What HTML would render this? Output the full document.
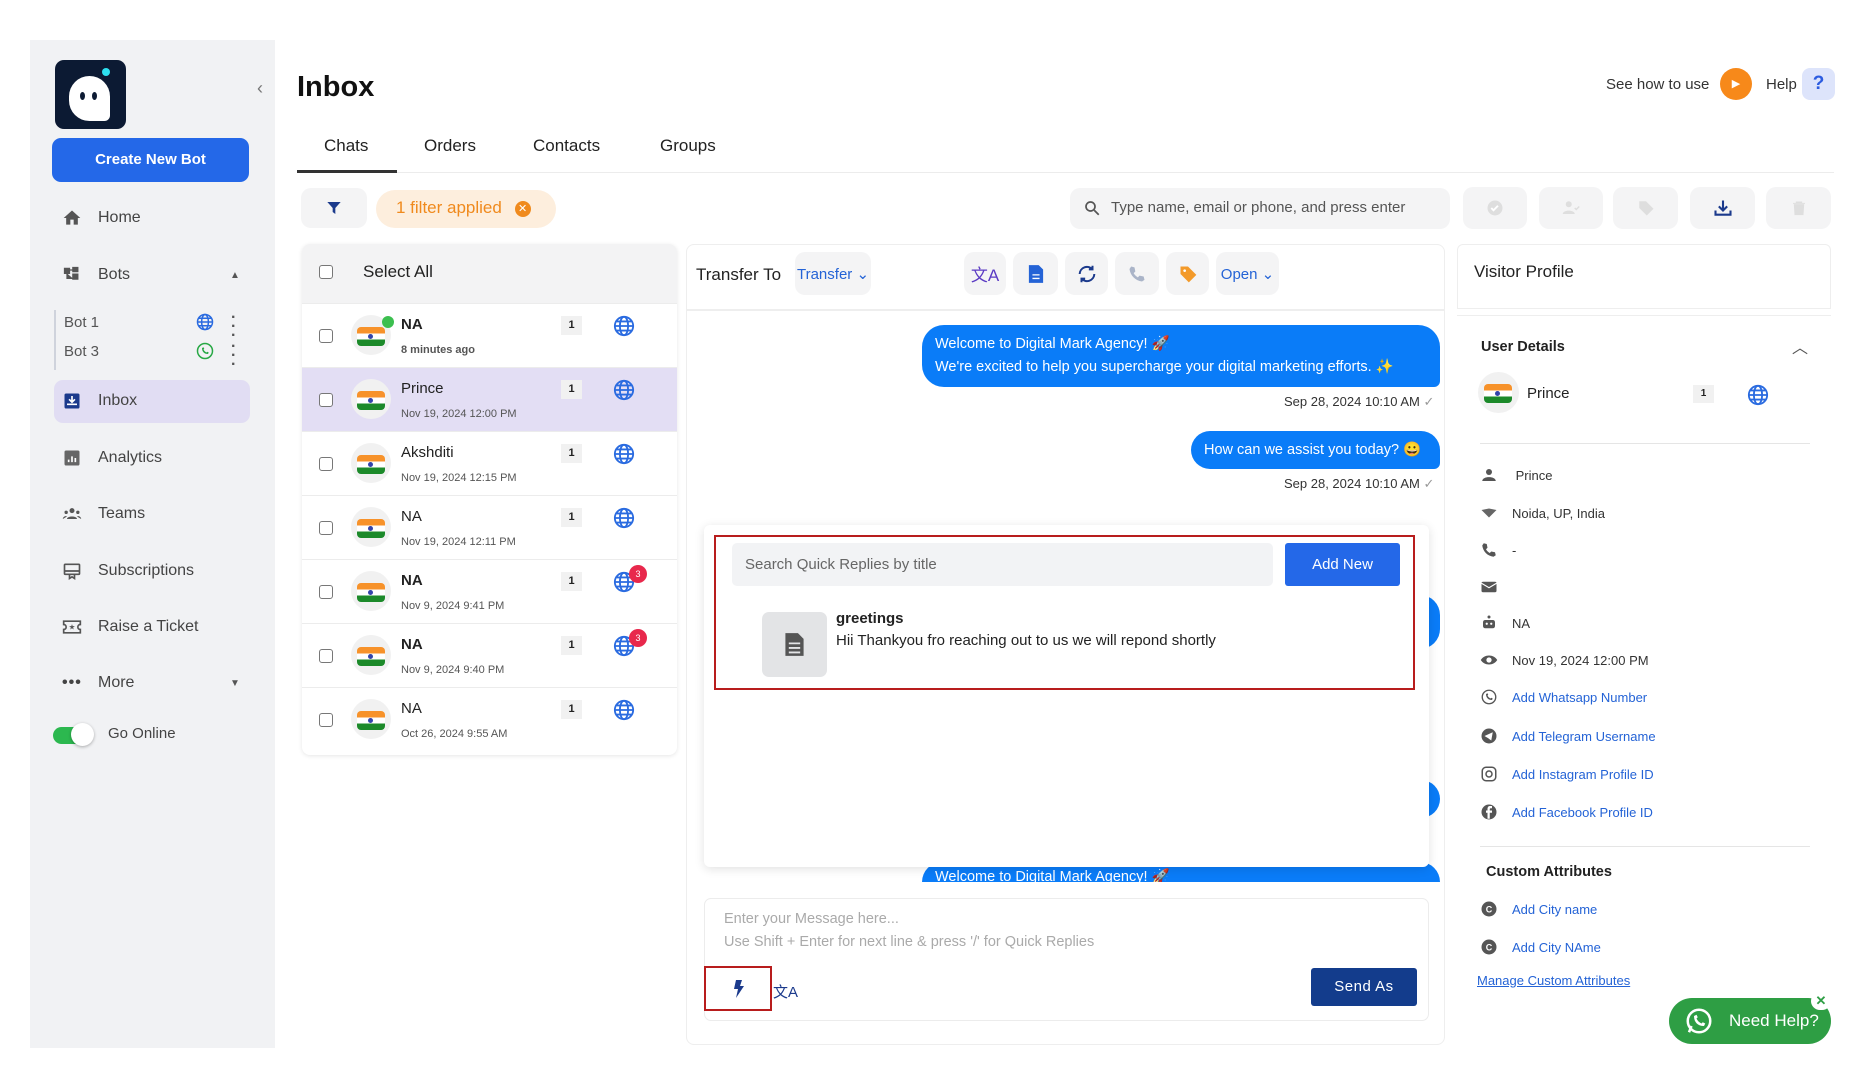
<!DOCTYPE html>
<html><head><meta charset="utf-8"><style>
*{box-sizing:border-box;margin:0;padding:0}
body{width:1866px;height:1080px;background:#fff;font-family:"Liberation Sans",sans-serif;color:#222;position:relative;overflow:hidden}
.a{position:absolute}
.side{left:30px;top:40px;width:245px;height:1008px;background:#f1f2f4}
.nav{position:absolute;left:62px;font-size:16px;color:#444;display:flex;align-items:center;gap:16px}
.nav svg{width:20px;height:20px}
.ibtn{position:absolute;background:#f4f4f5;border-radius:10px;display:flex;align-items:center;justify-content:center}
.row{position:absolute;left:302px;width:375px;height:64px;border-top:1px solid #ececec;background:#fff}
.cb{position:absolute;left:17px;top:25px;width:14px;height:14px;border:1.5px solid #777;border-radius:3px;background:#fff}
.av{position:absolute;left:49px;top:11px;width:40px;height:40px;border-radius:50%;background:#f1f1f1}
.flag{position:absolute;left:6px;top:12px;width:28px;height:19px;border-radius:4px;overflow:hidden;background:linear-gradient(#f7922a 0 33%,#fff 33% 66%,#1c8a2a 66%)}
.flag:after{content:"";position:absolute;left:11px;top:7px;width:5px;height:5px;border-radius:50%;background:#3344aa}
.nm{position:absolute;left:99px;top:12px;font-size:15px;color:#222}
.dt{position:absolute;left:99px;top:40px;font-size:11px;color:#555}
.bd{position:absolute;left:259px;top:12px;width:21px;height:19px;background:#f1f1f1;font-size:11px;font-weight:bold;text-align:center;line-height:19px}
.gl{position:absolute;left:311px;top:11px}
.rb{position:absolute;left:327px;top:5px;width:18px;height:18px;border-radius:50%;background:#e8284c;color:#fff;font-size:9px;text-align:center;line-height:18px}
.pr{position:absolute;left:1480px;font-size:13px;color:#333;display:flex;align-items:center;gap:14px}
.pr svg{width:18px;height:18px}
.lk{color:#2463d6}
</style></head><body>
<svg width="0" height="0" style="position:absolute"><defs>
<g id="globe"><circle cx="12" cy="12" r="10" fill="none" stroke="#2a6be0" stroke-width="2"/><ellipse cx="12" cy="12" rx="4.5" ry="10" fill="none" stroke="#2a6be0" stroke-width="2"/><path d="M2 12h20M4 7h16M4 17h16" stroke="#2a6be0" stroke-width="2"/></g>
</defs></svg>

<div class="a side"></div>
<div class="a" style="left:55px;top:60px;width:71px;height:69px;background:#0c1a33;border-radius:9px"></div>
<div class="a" style="left:69px;top:76px;width:41px;height:45px;background:#fff;border-radius:22px 22px 6px 22px"></div>
<div class="a" style="left:80px;top:92px;width:5px;height:8px;background:#0c1a33;border-radius:50%"></div>
<div class="a" style="left:92px;top:92px;width:5px;height:8px;background:#0c1a33;border-radius:50%"></div>
<div class="a" style="left:102px;top:68px;width:8px;height:8px;background:#2de0f0;border-radius:50%"></div>
<div class="a" style="left:257px;top:78px;color:#777;font-size:18px">‹</div>
<div class="a" style="left:52px;top:138px;width:197px;height:44px;background:#2468e8;border-radius:9px;color:#fff;font-size:15px;font-weight:bold;text-align:center;line-height:44px">Create New Bot</div>

<div class="nav" style="top:208px"><svg viewBox="0 0 24 24"><path d="M12 3L2 12h3v8h5v-6h4v6h5v-8h3z" fill="#555"/></svg>Home</div>
<div class="nav" style="top:265px"><svg viewBox="0 0 24 24"><path d="M3 4h6v6H3zM13 11h6v6h-6zM13 3h6v5h-6zM6 10v6h7M6 6h7" fill="#555" stroke="#555" stroke-width="1.5"/></svg>Bots</div>
<div class="a" style="left:230px;top:270px;font-size:10px;color:#555">▲</div>
<div class="a" style="left:54px;top:310px;width:2px;height:60px;background:#cfd3dc"></div>
<div class="a" style="left:64px;top:314px;font-size:15px;color:#555">Bot 1</div>
<div class="a" style="left:64px;top:343px;font-size:15px;color:#555">Bot 3</div>
<svg class="a" style="left:196px;top:313px" width="18" height="18" viewBox="0 0 24 24"><use href="#globe"/></svg>
<svg class="a" style="left:196px;top:342px" width="18" height="18" viewBox="0 0 24 24"><circle cx="12" cy="12" r="10" fill="none" stroke="#27a844" stroke-width="2"/><path d="M8 8c0 5 3 8 8 8l1-2-2-1-1 1c-2-1-3-2-4-4l1-1-1-2z" fill="#27a844"/></svg>
<div class="a" style="left:231px;top:313px;color:#555;font-size:16px;line-height:9px;font-weight:bold">·<br>·<br>·</div>
<div class="a" style="left:231px;top:342px;color:#555;font-size:16px;line-height:9px;font-weight:bold">·<br>·<br>·</div>
<div class="a" style="left:54px;top:380px;width:196px;height:43px;background:#e1ddf3;border-radius:9px"></div>
<div class="nav" style="top:391px"><svg viewBox="0 0 24 24"><rect x="3" y="3" width="18" height="18" rx="2" fill="#1b3a8c"/><path d="M12 6v7M8.5 10l3.5 3.5 3.5-3.5M6 16h12" stroke="#fff" stroke-width="2" fill="none"/></svg>Inbox</div>
<div class="nav" style="top:448px"><svg viewBox="0 0 24 24"><rect x="3" y="3" width="18" height="18" rx="2" fill="#666"/><path d="M8 17v-3M12 17v-7M16 17v-5" stroke="#fff" stroke-width="2"/></svg>Analytics</div>
<div class="nav" style="top:504px"><svg viewBox="0 0 24 24"><circle cx="12" cy="8" r="3" fill="#555"/><circle cx="5" cy="10" r="2" fill="#555"/><circle cx="19" cy="10" r="2" fill="#555"/><path d="M6 18c0-4 12-4 12 0zM1 18c0-3 4-4 5-3M23 18c0-3-4-4-5-3" fill="#555"/></svg>Teams</div>
<div class="nav" style="top:561px"><svg viewBox="0 0 24 24"><rect x="3" y="4" width="18" height="12" rx="1" fill="none" stroke="#555" stroke-width="2"/><path d="M3 12h18M9 16v5l3-2 3 2v-5" stroke="#555" stroke-width="2" fill="none"/></svg>Subscriptions</div>
<div class="nav" style="top:617px"><svg viewBox="0 0 24 24"><path d="M2 5h20v4a3 3 0 000 6v4H2v-4a3 3 0 000-6z" fill="none" stroke="#555" stroke-width="2"/><text x="12" y="15" font-size="9" text-anchor="middle" fill="#555">★</text></svg>Raise a Ticket</div>
<div class="nav" style="top:674px"><span style="width:20px;font-weight:bold;letter-spacing:1px">•••</span>More</div>
<div class="a" style="left:230px;top:678px;font-size:10px;color:#555">▼</div>
<div class="a" style="left:53px;top:727px;width:38px;height:17px;background:#2cb84f;border-radius:9px"></div>
<div class="a" style="left:71px;top:723px;width:23px;height:23px;background:#fff;border-radius:50%;box-shadow:0 1px 3px rgba(0,0,0,.3)"></div>
<div class="a" style="left:108px;top:725px;font-size:15px;color:#444">Go Online</div>

<div class="a" style="left:297px;top:71px;font-size:29px;font-weight:bold;color:#111">Inbox</div>
<div class="a" style="left:1606px;top:76px;font-size:15px;color:#333">See how to use</div>
<div class="a" style="left:1720px;top:68px;width:32px;height:32px;border-radius:50%;background:#f7891a;color:#fff;font-size:11px;text-align:center;line-height:32px">▶</div>
<div class="a" style="left:1766px;top:76px;font-size:15px;color:#333">Help</div>
<div class="a" style="left:1802px;top:68px;width:33px;height:32px;border-radius:8px;background:#dde4fb;color:#2c5ce0;font-size:19px;font-weight:bold;text-align:center;line-height:32px">?</div>

<div class="a" style="left:324px;top:136px;font-size:17px;color:#222">Chats</div>
<div class="a" style="left:424px;top:136px;font-size:17px;color:#222">Orders</div>
<div class="a" style="left:533px;top:136px;font-size:17px;color:#222">Contacts</div>
<div class="a" style="left:660px;top:136px;font-size:17px;color:#222">Groups</div>
<div class="a" style="left:297px;top:172px;width:1537px;height:1px;background:#ececec"></div>
<div class="a" style="left:297px;top:170px;width:100px;height:3px;background:#333"></div>

<div class="ibtn" style="left:301px;top:188px;width:66px;height:40px"><svg width="16" height="16" viewBox="0 0 24 24"><path d="M2 3h20l-8 9v9l-4-3v-6z" fill="#1b3a8c"/></svg></div>
<div class="a" style="left:376px;top:190px;width:180px;height:38px;background:#fdeedd;border-radius:19px;color:#f08a1d;font-size:17px;padding:8px 0 0 20px">1 filter applied <span style="display:inline-block;width:16px;height:16px;border-radius:50%;background:#f08a1d;color:#fff;font-size:11px;text-align:center;line-height:16px;margin-left:8px;vertical-align:1px">✕</span></div>
<div class="a" style="left:1070px;top:188px;width:380px;height:41px;background:#f4f4f5;border-radius:10px"></div>
<svg class="a" style="left:1083px;top:199px" width="18" height="18" viewBox="0 0 24 24"><circle cx="10" cy="10" r="6" fill="none" stroke="#555" stroke-width="2.3"/><path d="M15 15l6 6" stroke="#555" stroke-width="2.3"/></svg>
<div class="a" style="left:1111px;top:199px;font-size:15px;color:#555">Type name, email or phone, and press enter</div>
<div class="ibtn" style="left:1463px;top:187px;width:64px;height:42px"><svg width="18" height="18" viewBox="0 0 24 24"><circle cx="12" cy="12" r="10" fill="#dedede"/><path d="M7 12l3 3 6-6" stroke="#fff" stroke-width="2.5" fill="none"/></svg></div>
<div class="ibtn" style="left:1539px;top:187px;width:64px;height:42px"><svg width="20" height="18" viewBox="0 0 24 24"><circle cx="9" cy="7" r="4" fill="#dedede"/><path d="M1 20c0-6 16-6 16 0z" fill="#dedede"/><path d="M17 12l2 2 4-4" stroke="#dedede" stroke-width="2" fill="none"/></svg></div>
<div class="ibtn" style="left:1613px;top:187px;width:65px;height:42px"><svg width="18" height="18" viewBox="0 0 24 24"><path d="M3 3h9l10 10-9 9L3 12z" fill="#dedede"/></svg></div>
<div class="ibtn" style="left:1690px;top:187px;width:65px;height:42px"><svg width="20" height="20" viewBox="0 0 24 24"><path d="M12 3v11M7 10l5 5 5-5M3 15v5h18v-5" stroke="#1b3a8c" stroke-width="2.5" fill="none"/></svg></div>
<div class="ibtn" style="left:1766px;top:187px;width:65px;height:42px"><svg width="16" height="18" viewBox="0 0 24 24"><path d="M3 5h18M8 5V3h8v2M5 7h14l-1 15H6z" fill="#dedede" stroke="#dedede" stroke-width="1.5"/></svg></div>

<!-- chat list -->
<div class="a" style="left:302px;top:244px;width:375px;height:511px;background:#fff;border-radius:8px;box-shadow:0 1px 4px rgba(0,0,0,.1)"></div>
<div class="a" style="left:302px;top:244px;width:375px;height:59px;background:#f3f3f4;border-radius:8px 8px 0 0"></div>
<div class="a" style="left:319px;top:265px;width:14px;height:14px;border:1.5px solid #777;border-radius:3px;background:#fff"></div>
<div class="a" style="left:363px;top:262px;font-size:17px;color:#222">Select All</div>

<div class="row" style="top:303px"><div class="cb"></div><div class="av"><div class="flag"></div></div><div class="a" style="left:80px;top:12px;width:12px;height:12px;border-radius:50%;background:#3cbf4f"></div><div class="nm" style="font-weight:bold">NA</div><div class="dt" style="font-weight:bold">8 minutes ago</div><div class="bd">1</div><svg class="gl" width="22" height="22" viewBox="0 0 24 24"><use href="#globe"/></svg></div>
<div class="row" style="top:367px;background:#e3def4"><div class="cb"></div><div class="av"><div class="flag"></div></div><div class="nm">Prince</div><div class="dt">Nov 19, 2024 12:00 PM</div><div class="bd">1</div><svg class="gl" width="22" height="22" viewBox="0 0 24 24"><use href="#globe"/></svg></div>
<div class="row" style="top:431px"><div class="cb"></div><div class="av"><div class="flag"></div></div><div class="nm">Akshditi</div><div class="dt">Nov 19, 2024 12:15 PM</div><div class="bd">1</div><svg class="gl" width="22" height="22" viewBox="0 0 24 24"><use href="#globe"/></svg></div>
<div class="row" style="top:495px"><div class="cb"></div><div class="av"><div class="flag"></div></div><div class="nm">NA</div><div class="dt">Nov 19, 2024 12:11 PM</div><div class="bd">1</div><svg class="gl" width="22" height="22" viewBox="0 0 24 24"><use href="#globe"/></svg></div>
<div class="row" style="top:559px"><div class="cb"></div><div class="av"><div class="flag"></div></div><div class="nm" style="font-weight:bold">NA</div><div class="dt">Nov 9, 2024 9:41 PM</div><div class="bd">1</div><svg class="gl" width="22" height="22" viewBox="0 0 24 24"><use href="#globe"/></svg><div class="rb">3</div></div>
<div class="row" style="top:623px"><div class="cb"></div><div class="av"><div class="flag"></div></div><div class="nm" style="font-weight:bold">NA</div><div class="dt">Nov 9, 2024 9:40 PM</div><div class="bd">1</div><svg class="gl" width="22" height="22" viewBox="0 0 24 24"><use href="#globe"/></svg><div class="rb">3</div></div>
<div class="row" style="top:687px;border-radius:0 0 8px 8px"><div class="cb"></div><div class="av"><div class="flag"></div></div><div class="nm">NA</div><div class="dt">Oct 26, 2024 9:55 AM</div><div class="bd">1</div><svg class="gl" width="22" height="22" viewBox="0 0 24 24"><use href="#globe"/></svg></div>

<!-- chat panel -->
<div class="a" style="left:686px;top:244px;width:759px;height:801px;background:#fff;border:1px solid #eee;border-radius:8px"></div>
<div class="a" style="left:686px;top:309px;width:759px;height:2px;background:#eee"></div>
<div class="a" style="left:696px;top:265px;font-size:17px;color:#222">Transfer To</div>
<div class="ibtn" style="left:751px;top:252px;width:76px;height:43px;left:751px;justify-content:flex-start;padding-left:2px;background:none"></div>
<div class="ibtn" style="left:751px;top:252px;width:0;height:0"></div>
<div class="ibtn" style="left:751px;top:252px;width:0"></div>
<div class="ibtn" style="left:750px;top:252px;width:0"></div>
<div class="ibtn" style="left:795px;top:252px;width:76px;height:43px;color:#2463d6;font-size:15px">Transfer ⌄</div>
<div class="ibtn" style="left:964px;top:252px;width:42px;height:43px;color:#5b3bc4;font-size:17px">文A</div>
<div class="ibtn" style="left:1013px;top:252px;width:45px;height:43px"><svg width="16" height="20" viewBox="0 0 18 22"><path d="M1 1h11l5 5v15H1z" fill="#2463d6"/><path d="M5 12h8M5 16h8" stroke="#fff" stroke-width="1.5"/></svg></div>
<div class="ibtn" style="left:1065px;top:252px;width:43px;height:43px"><svg width="22" height="22" viewBox="0 0 24 24"><path d="M20 12a8 8 0 01-14 5M4 12a8 8 0 0114-5M18 3v4h-4M6 21v-4h4" stroke="#1b3a8c" stroke-width="2.2" fill="none"/></svg></div>
<div class="ibtn" style="left:1115px;top:252px;width:44px;height:43px"><svg width="20" height="20" viewBox="0 0 24 24"><path d="M5 3l4 1 1 5-2 2c1 2 3 4 5 5l2-2 5 1 1 4-3 2C10 20 4 14 3 6z" fill="#aab4c8"/></svg></div>
<div class="ibtn" style="left:1166px;top:252px;width:43px;height:43px"><svg width="20" height="20" viewBox="0 0 24 24"><path d="M3 3h9l10 10-9 9L3 12z" fill="#f39a2a"/><circle cx="8" cy="8" r="1.6" fill="#fff"/></svg></div>
<div class="ibtn" style="left:1216px;top:252px;width:63px;height:43px;color:#2463d6;font-size:15px">Open ⌄</div>

<div class="a" style="left:922px;top:325px;width:518px;height:62px;background:#0a7cf8;border-radius:22px 22px 6px 22px;color:#fff;font-size:14.5px;line-height:23px;padding:8px 0 0 13px">Welcome to Digital Mark Agency! 🚀<br>We're excited to help you supercharge your digital marketing efforts. ✨</div>
<div class="a" style="left:1284px;top:394px;font-size:13px;color:#333">Sep 28, 2024 10:10 AM <span style="color:#999">✓</span></div>
<div class="a" style="left:1191px;top:431px;width:249px;height:38px;background:#0a7cf8;border-radius:19px 19px 6px 19px;color:#fff;font-size:14.5px;line-height:38px;padding-left:13px">How can we assist you today? 😀</div>
<div class="a" style="left:1284px;top:476px;font-size:13px;color:#333">Sep 28, 2024 10:10 AM <span style="color:#999">✓</span></div>
<div class="a" style="left:1360px;top:595px;width:80px;height:54px;background:#0a7cf8;border-radius:0 20px 20px 0"></div>
<div class="a" style="left:1360px;top:780px;width:80px;height:38px;background:#0a7cf8;border-radius:0 20px 20px 0"></div>
<div class="a" style="left:922px;top:862px;width:518px;height:20px;background:#0a7cf8;border-radius:20px 20px 0 0;overflow:hidden;color:#fff;font-size:14.5px;padding:6px 0 0 13px">Welcome to Digital Mark Agency! 🚀</div>

<div class="a" style="left:704px;top:525px;width:725px;height:342px;background:#fff;border-radius:6px;box-shadow:0 2px 10px rgba(0,0,0,.12)"></div>
<div class="a" style="left:714px;top:535px;width:701px;height:155px;border:2px solid #b81d1d"></div>
<div class="a" style="left:732px;top:543px;width:541px;height:43px;background:#f2f3f5;border-radius:5px;font-size:15px;color:#666;padding:13px 0 0 13px">Search Quick Replies by title</div>
<div class="a" style="left:1285px;top:543px;width:115px;height:43px;background:#2468e8;border-radius:3px;color:#fff;font-size:15px;text-align:center;line-height:43px">Add New</div>
<div class="a" style="left:762px;top:612px;width:65px;height:65px;background:#e3e4e6;border-radius:7px"></div>
<svg class="a" style="left:783px;top:632px" width="23" height="25" viewBox="0 0 18 22"><path d="M1 1h11l5 5v15H1z" fill="#555"/><path d="M4 10h10M4 14h10M4 18h10" stroke="#e3e4e6" stroke-width="1.6"/></svg>
<div class="a" style="left:836px;top:610px;font-size:15px;font-weight:bold;color:#222">greetings</div>
<div class="a" style="left:836px;top:632px;font-size:15px;color:#222">Hii Thankyou fro reaching out to us we will repond shortly</div>

<div class="a" style="left:704px;top:898px;width:725px;height:123px;background:#fff;border:1px solid #ececec;border-radius:7px"></div>
<div class="a" style="left:724px;top:911px;font-size:14.5px;color:#aaa">Enter your Message here...</div>
<div class="a" style="left:724px;top:934px;font-size:14.5px;color:#aaa">Use Shift + Enter for next line &amp; press '/' for Quick Replies</div>
<div class="a" style="left:704px;top:966px;width:68px;height:45px;border:2px solid #b81d1d"></div>
<svg class="a" style="left:733px;top:980px" width="12" height="18" viewBox="0 0 12 18"><path d="M3 0h6L7 6h4L3 18l2-9H1z" fill="#1b3a8c"/></svg>
<div class="a" style="left:773px;top:981px;font-size:15px;color:#1b3a8c">文A</div>
<div class="a" style="left:1311px;top:968px;width:106px;height:38px;background:#133c8c;border-radius:3px;color:#fff;font-size:15px;text-align:center;line-height:38px;letter-spacing:.5px">Send As</div>

<!-- profile -->
<div class="a" style="left:1457px;top:244px;width:374px;height:65px;border:1px solid #eee;border-radius:6px 6px 0 0"></div>
<div class="a" style="left:1474px;top:262px;font-size:17px;color:#222">Visitor Profile</div>
<div class="a" style="left:1457px;top:315px;width:374px;height:1px;background:#eee"></div>
<div class="a" style="left:1481px;top:339px;font-size:14.5px;font-weight:bold;color:#222">User Details</div>
<div class="a" style="left:1792px;top:334px;font-size:16px;color:#555">︿</div>
<div class="a" style="left:1478px;top:372px;width:41px;height:41px;border-radius:50%;background:#f1f1f1"><div class="flag"></div></div>
<div class="a" style="left:1527px;top:385px;font-size:15px;color:#222">Prince</div>
<div class="a" style="left:1693px;top:385px;width:21px;height:18px;background:#f1f1f1;font-size:10px;font-weight:bold;text-align:center;line-height:18px">1</div>
<svg class="a" style="left:1747px;top:384px" width="22" height="22" viewBox="0 0 24 24"><use href="#globe"/></svg>
<div class="a" style="left:1480px;top:443px;width:330px;height:1px;background:#e5e5e5"></div>
<div class="pr" style="top:466px"><svg viewBox="0 0 24 24"><circle cx="12" cy="8" r="4" fill="#555"/><path d="M3 20c0-7 18-7 18 0z" fill="#555"/></svg>&nbsp;Prince</div>
<div class="pr" style="top:504px"><svg viewBox="0 0 24 24"><path d="M2 8l10-2 10 2-10 10z" fill="#666"/></svg>Noida, UP, India</div>
<div class="pr" style="top:541px"><svg viewBox="0 0 24 24"><path d="M5 3l4 1 1 5-2 2c1 2 3 4 5 5l2-2 5 1 1 4-3 2C10 20 4 14 3 6z" fill="#555"/></svg>-</div>
<div class="pr" style="top:578px"><svg viewBox="0 0 24 24"><rect x="2" y="5" width="20" height="14" rx="2" fill="#555"/><path d="M2 7l10 6 10-6" stroke="#fff" stroke-width="1.5" fill="none"/></svg></div>
<div class="pr" style="top:614px"><svg viewBox="0 0 24 24"><rect x="4" y="8" width="16" height="11" rx="3" fill="#555"/><circle cx="12" cy="4" r="2" fill="#555"/><circle cx="9" cy="13" r="1.5" fill="#fff"/><circle cx="15" cy="13" r="1.5" fill="#fff"/></svg>NA</div>
<div class="pr" style="top:651px"><svg viewBox="0 0 24 24"><path d="M1 12c5-8 17-8 22 0-5 8-17 8-22 0z" fill="#555"/><circle cx="12" cy="12" r="3.5" fill="#fff"/></svg>Nov 19, 2024 12:00 PM</div>
<div class="pr lk" style="top:688px"><svg viewBox="0 0 24 24"><circle cx="12" cy="12" r="9" fill="none" stroke="#555" stroke-width="1.8"/><path d="M8 8c0 5 3 8 8 8l1-2-2-1-1 1c-2-1-3-2-4-4l1-1-1-2z" fill="#555"/></svg>Add Whatsapp Number</div>
<div class="pr lk" style="top:727px"><svg viewBox="0 0 24 24"><circle cx="12" cy="12" r="10" fill="#555"/><path d="M6 12l11-5-2 11-4-3z" fill="#fff"/></svg>Add Telegram Username</div>
<div class="pr lk" style="top:765px"><svg viewBox="0 0 24 24"><rect x="3" y="3" width="18" height="18" rx="5" fill="none" stroke="#555" stroke-width="2"/><circle cx="12" cy="12" r="4" fill="none" stroke="#555" stroke-width="2"/></svg>Add Instagram Profile ID</div>
<div class="pr lk" style="top:803px"><svg viewBox="0 0 24 24"><circle cx="12" cy="12" r="10" fill="#555"/><path d="M13 21v-8h3v-3h-3V8c0-1 1-1 2-1h1V4h-3c-2 0-3 2-3 4v2H8v3h2v8" fill="#fff"/></svg>Add Facebook Profile ID</div>
<div class="a" style="left:1480px;top:846px;width:330px;height:1px;background:#e5e5e5"></div>
<div class="a" style="left:1486px;top:864px;font-size:14.5px;font-weight:bold;color:#222">Custom Attributes</div>
<div class="pr lk" style="top:900px"><svg viewBox="0 0 24 24"><circle cx="12" cy="12" r="10" fill="#555"/><text x="12" y="16.5" font-size="12" text-anchor="middle" fill="#fff" font-weight="bold">C</text></svg>Add City name</div>
<div class="pr lk" style="top:938px"><svg viewBox="0 0 24 24"><circle cx="12" cy="12" r="10" fill="#555"/><text x="12" y="16.5" font-size="12" text-anchor="middle" fill="#fff" font-weight="bold">C</text></svg>Add City NAme</div>
<div class="a lk" style="left:1477px;top:973px;font-size:13px;text-decoration:underline">Manage Custom Attributes</div>

<div class="a" style="left:1669px;top:998px;width:162px;height:46px;background:#2e9e44;border-radius:23px;color:#fff;font-size:17px;line-height:46px;padding-left:60px">Need Help?</div>
<svg class="a" style="left:1684px;top:1006px" width="30" height="30" viewBox="0 0 24 24"><circle cx="12" cy="12" r="9" fill="none" stroke="#fff" stroke-width="2"/><path d="M4 21l2-5" stroke="#fff" stroke-width="2"/><path d="M8 8c0 5 3 8 8 8l1-2-2-1-1 1c-2-1-3-2-4-4l1-1-1-2z" fill="#fff"/></svg>
<div class="a" style="left:1811px;top:992px;width:20px;height:18px;background:#fff;border-radius:9px;color:#2e9e44;font-size:13px;font-weight:bold;text-align:center;line-height:18px">✕</div>
</body></html>
